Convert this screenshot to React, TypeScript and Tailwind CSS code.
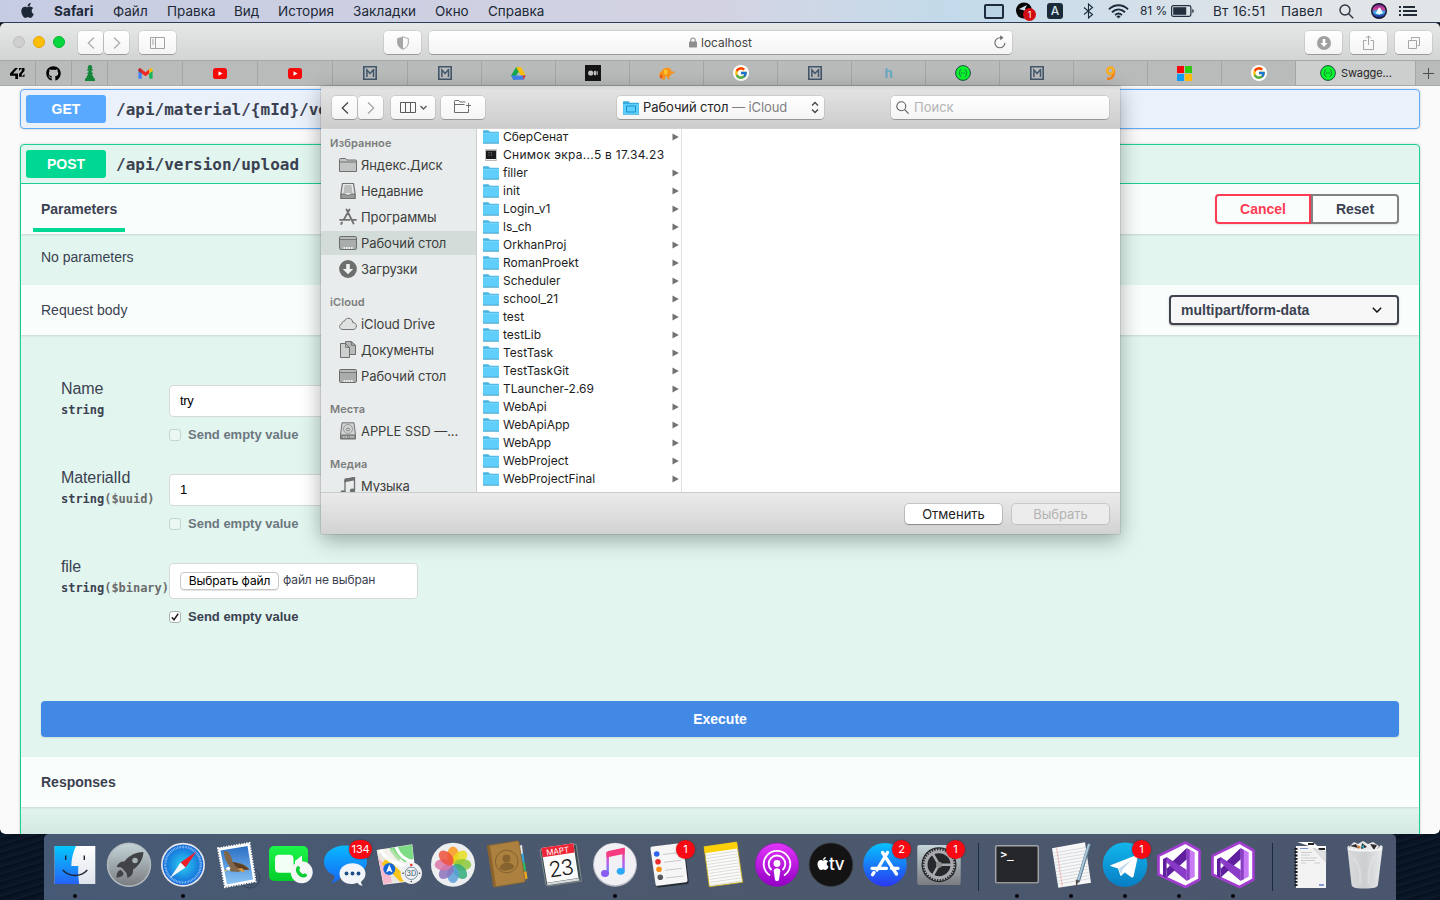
import type { ReactNode } from "react";
import { FaApple, FaGithub } from "react-icons/fa";
import { FcGoogle } from "react-icons/fc";

/* ---------- menu bar ---------- */

const MENUS: [string, string][] = [
  ["Файл", "w-[54px] tracking-[0.05px]"],
  ["Правка", "w-[67px]"],
  ["Вид", "w-[44px]"],
  ["История", "w-[75px] tracking-[0.05px]"],
  ["Закладки", "w-[82px] tracking-[0.1px]"],
  ["Окно", "w-[53px]"],
  ["Справка", "w-[60px]"],
];

function MenuBar() {
  return (
    <div className="flex h-[22px] shrink-0 items-center bg-linear-to-r from-[#c6cce2] via-[#d3d3e2] to-[#e3e4e8] text-[13.5px] leading-[22px] whitespace-nowrap text-[#1c2836]">
      <div className="flex h-full w-full items-center bg-linear-to-r from-transparent from-50% via-[#c2daea] via-66% to-[#e2e5e8] to-90%">
        <FaApple className="ml-[19px] h-[17px] w-[17px] -translate-y-px" />
        <span className="ml-[18px] w-[59px] font-bold tracking-[0.1px]">Safari</span>
        {MENUS.map(([name, cls]) => (
          <span key={name} className={cls}>{name}</span>
        ))}
        <div className="ml-auto flex h-full items-center pr-[23px]">
          <div className="h-[15px] w-[20px] rounded-[2px] border-2 border-[#1c2b3d] bg-[#b9d3e2]" />
          <svg className="ml-[12px] h-[20px] w-[21px]" viewBox="0 0 21 20">
            <circle cx="8" cy="9.500" r="8" fill="#050505" />
            <path d="M3 8l8-4-2 4 1 2z" fill="#cfe0ec" />
            <circle cx="13.500" cy="13.500" r="6.500" fill="#d20a12" />
            <text x="13.500" y="16.800" textAnchor="middle" fontFamily="Inter, sans-serif" fontSize="9" fill="#fff">1</text>
          </svg>
          <div className="ml-[10px] flex h-[16px] w-[16px] items-center justify-center rounded-[3px] bg-[#1b2a39] text-[12px] font-medium text-[#d6e6f0]">A</div>
          <svg className="ml-[20px] h-[16px] w-[11px]" viewBox="0 0 11 16" fill="none" stroke="#1c2b3a" strokeWidth="1.100">
            <path d="M1 4.500l8.500 7L5.500 15V1l4 3.500L1 11.500" />
          </svg>
          <svg className="ml-[14px] h-[15px] w-[21px]" viewBox="0 0 21 15" fill="none" stroke="#1c2b3a" strokeWidth="1.900">
            <path d="M1 5.200C6.500-.1 14.500-.1 20 5.200M4 8.200c4-3.700 9-3.700 13 0M7 11.100c2.200-1.900 4.800-1.900 7 0" />
            <path d="M8.300 12.200L10.500 14.600l2.200-2.400c-1.300-1-3.100-1-4.400 0z" fill="#1c2b3a" stroke="none" />
          </svg>
          <span className="ml-[11px] w-[31px] text-[12px] tracking-[-0.1px]">81 %</span>
          <svg className="h-[12px] w-[24px]" viewBox="0 0 24 12">
            <rect x=".6" y=".6" width="19.300" height="10.800" rx="1.800" fill="none" stroke="#222f3d" strokeWidth="1.200" />
            <rect x="2.200" y="2.200" width="13" height="7.600" fill="#222f3d" />
            <path d="M21.300 3.800c2 .8 2 3.600 0 4.400z" fill="#222f3d" />
          </svg>
          <span className="ml-[18px] w-[68px] tracking-[0.25px]">Вт 16:51</span>
          <span className="w-[58px] tracking-[0.15px]">Павел</span>
          <svg className="h-[15px] w-[15px]" viewBox="0 0 15 15" fill="none" stroke="#2b3440" strokeWidth="1.400">
            <circle cx="6" cy="6" r="5" />
            <path d="M9.700 9.700l4.500 4.500" />
          </svg>
          <svg className="ml-[17px] h-[16px] w-[16px]" viewBox="0 0 16 16">
            <defs>
              <linearGradient id="siri" x1="0" y1="0" x2="0" y2="1">
                <stop offset="0" stopColor="#7a2a8a" />
                <stop offset=".35" stopColor="#d0409c" />
                <stop offset=".6" stopColor="#3f7ee0" />
                <stop offset="1" stopColor="#1a2a80" />
              </linearGradient>
            </defs>
            <circle cx="8" cy="8" r="8" fill="#14132c" />
            <circle cx="8" cy="8" r="6.600" fill="url(#siri)" />
            <path d="M1.800 9c2-1 3.500-2.500 6.200-2.500S12.500 8 14.500 9c-2 .2-3 3-6.500 3S4.500 9.500 1.800 9z" fill="#35c8f0" opacity=".75" />
            <path d="M4 11c2-1.200 3-6.500 4.500-6.500S10.500 9 12.500 10.500c-2-.3-3 .5-4 1-1.200-.8-2.500-.8-4.500-.5z" fill="#fff" opacity=".92" />
          </svg>
          <svg className="ml-[12px] h-[12px] w-[18px]" viewBox="0 0 18 12" fill="#222b35">
            <path d="M0 1h2v2H0zM0 5h2v2H0zM0 9h2v2H0zM4 1h12v2H4zM4 5h14v2H4zM4 9h14v2H4z" />
          </svg>
        </div>
      </div>
    </div>
  );
}

/* ---------- browser chrome ---------- */

function ToolButton({ className, children }: { className: string; children?: ReactNode }) {
  return (
    <div className={`flex h-[23px] items-center justify-center rounded-[4px] bg-linear-to-b from-white to-[#f4f4f4] shadow-[0_0_0_0.5px_rgba(0,0,0,0.16),0_1px_0.5px_rgba(0,0,0,0.22)] ${className}`}>
      {children}
    </div>
  );
}

function BrowserToolbar() {
  return (
    <div className="flex h-[37px] shrink-0 items-start bg-linear-to-b from-[#e5e8e7] to-[#d3d5d4] pt-[8px]">
      <div className="mt-[5px] ml-[13px] flex gap-[8px]">
        <div className="h-[12px] w-[12px] rounded-full border border-[#bdbdbd] bg-[#d0cfd0]" />
        <div className="h-[12px] w-[12px] rounded-full border border-[#e2a300] bg-[#ffbf06]" />
        <div className="h-[12px] w-[12px] rounded-full border border-[#00b52d] bg-[#06d73f]" />
      </div>
      <ToolButton className="ml-[13px] w-[25px]">
        <svg className="h-[14px] w-[8px]" viewBox="0 0 8 14" fill="none" stroke="#adadad" strokeWidth="1.300"><path d="M7 1.500L1.300 7 7 12.500" /></svg>
      </ToolButton>
      <ToolButton className="ml-px w-[25px]">
        <svg className="h-[14px] w-[8px]" viewBox="0 0 8 14" fill="none" stroke="#adadad" strokeWidth="1.300"><path d="M1 1.500L6.700 7 1 12.500" /></svg>
      </ToolButton>
      <ToolButton className="ml-[10px] w-[37px]">
        <svg className="h-[12px] w-[15px]" viewBox="0 0 15 12" fill="none" stroke="#a3a3a3" strokeWidth="1">
          <path d="M.5.500h14v11H.5zM5.500.500v11M2 3h2M2 5h2M2 7h2" />
        </svg>
      </ToolButton>
      <ToolButton className="ml-[208px] w-[37px]">
        <svg className="h-[14px] w-[12px]" viewBox="0 0 12 14">
          <path d="M6 .7C4.500 1.700 2.500 2.200.7 2.400V7c0 3 2.300 5 5.300 6.300C9 12 11.300 10 11.300 7V2.400C9.500 2.200 7.500 1.700 6 .7z" fill="none" stroke="#a5a5a5" />
          <path d="M6 .7C4.500 1.700 2.500 2.200.7 2.400V7c0 3 2.300 5 5.300 6.300z" fill="#a5a5a5" />
        </svg>
      </ToolButton>
      <ToolButton className="relative ml-[8px] w-[583px]">
        <svg className="mr-[4px] h-[11px] w-[8px]" viewBox="0 0 8 11">
          <path d="M1.800 5V3.200a2.200 2.200 0 014.400 0V5" fill="none" stroke="#8f8f8f" strokeWidth="1.100" />
          <rect y="4.500" width="8" height="6" rx=".8" fill="#8f8f8f" />
        </svg>
        <span className="text-[12px] leading-[22px] tracking-[-0.05px] text-[#454545]">localhost</span>
        <svg className="absolute top-[4px] right-[6px] h-[14px] w-[12px]" viewBox="0 0 12 14" fill="none" stroke="#6b6b6b" strokeWidth="1.100">
          <path d="M10.900 6.200M10.900 7.800A5 5 0 116 2.800h1.500" />
          <path d="M6.200.3l3.300 2.500-3.300 2.500z" fill="#6b6b6b" stroke="none" />
        </svg>
      </ToolButton>
      <div className="mr-[8px] ml-auto flex gap-[8px]">
        <ToolButton className="w-[37px]">
          <svg className="h-[14px] w-[14px]" viewBox="0 0 14 14"><circle cx="7" cy="7" r="7" fill="#a0a0a0" /><path d="M5.700 3h2.600v4h2.300L7 11 3.400 7h2.300z" fill="#fff" /></svg>
        </ToolButton>
        <ToolButton className="w-[37px]">
          <svg className="h-[15px] w-[11px]" viewBox="0 0 11 15" fill="none" stroke="#a6a6a6"><path d="M3.500 5.500h-3v9h10v-9h-3M5.500 10V1M3 3.300L5.500.8 8 3.300" /></svg>
        </ToolButton>
        <ToolButton className="w-[37px]">
          <svg className="h-[12px] w-[12px]" viewBox="0 0 12 12" fill="none" stroke="#a6a6a6"><path d="M.5 3.500h8v8h-8zM3.500 2.500v-2h8v8h-2" /></svg>
        </ToolButton>
      </div>
    </div>
  );
}

const YouTube = () => (
  <svg className="h-[11px] w-[14px]" viewBox="0 0 14 11"><rect width="14" height="11" rx="2.800" fill="#f50a0a" /><path d="M5.500 3.200v4.600l4-2.300z" fill="#fff" /></svg>
);
const MLogo = () => (
  <svg className="h-[14px] w-[14px]" viewBox="0 0 14 14" fill="none" stroke="#42566c">
    <path d="M.8.800h12.400v12.400H.8z" strokeWidth="1.600" />
    <path d="M3.900 11V4L7 7.500 10.500 3.800M10.500 3V11" strokeWidth="1.500" />
  </svg>
);
const Google = () => (
  <div className="flex h-[16px] w-[16px] items-center justify-center rounded-full bg-white"><FcGoogle className="h-[14px] w-[14px]" /></div>
);
const Swagger = () => (
  <svg className="h-[16px] w-[16px]" viewBox="0 0 16 16">
    <circle cx="8" cy="8" r="7.400" fill="#0cf52f" stroke="#17423c" strokeWidth=".9" />
    <path d="M6.300 4.500c-2 0-.8 2.500-2.300 3.500 1.500 1 .3 3.500 2.300 3.500M9.700 4.500c2 0 .8 2.500 2.300 3.500-1.500 1-.3 3.500-2.300 3.500" fill="none" stroke="#17423c" strokeWidth=".8" opacity=".8" />
    <path d="M6 8h4" stroke="#17423c" strokeDasharray="1 .6" strokeWidth=".9" opacity=".8" />
  </svg>
);
const Gmail = () => (
  <svg className="h-[11px] w-[15px]" viewBox="0 0 15 11">
    <path d="M.4 2.500v7.700c0 .4.300.6.600.6h2.800V5z" fill="#4285f4" />
    <path d="M14.600 2.500v7.700c0 .4-.3.600-.6.600h-2.800V5z" fill="#18b55b" />
    <path d="M3.800 1.300l3.700 2.900 3.700-2.900v4.100L7.500 8.300 3.800 5.400z" fill="#f02a22" />
    <path d="M.4 2.900V1.700C.4.400 1.700-.1 2.700.5l1.100.8v4.100z" fill="#c5221f" />
    <path d="M14.600 2.900V1.700c0-1.300-1.300-1.800-2.300-1.200l-1.100.8v4.100z" fill="#fbbc04" />
  </svg>
);
const Drive = () => (
  <svg className="h-[13px] w-[15px]" viewBox="0 0 15 13">
    <path d="M5 .3h2.500l2.300 4-5.200 8.400H2.400L.2 8.600z" fill="#12a94f" />
    <path d="M5 .3h5l4.800 8.300H9.900z" fill="#ffc107" />
    <path d="M.2 8.600h14.600l-2.200 4.100H2.400z" fill="#4280f3" />
    <path d="M11.500 8.600h3.300l-2.200 4.100z" fill="#ea4335" />
    <path d="M7.500 4.800L9.700 8.600H5.200z" fill="#bbbdbc" />
  </svg>
);

const TABS: [string, ReactNode][] = [
  ["w-[36px]", <svg key="a" className="h-[11px] w-[15px]" viewBox="0 0 15 11"><path d="M5 0H8L3 5.500H8V11H5.300V7.700H0V5.500zM9 0h2.700L9 3zM14.500 0v3l-2.700 3v2.700H9V6l2.700-3V0zM14.500 6v2.700h-2.700z" /></svg>],
  ["w-[36px]", <FaGithub key="b" className="h-[15px] w-[15px] text-black" />],
  ["w-[36px]", <svg key="c" className="h-[16px] w-[10px]" viewBox="0 0 10 16" fill="#14863a"><circle cx="5" cy="2.200" r="2.200" /><path d="M2.200 4h5.600v1.400H6.500l.4 2.300h1v1.200H6.800L9 13l1 1v2H0v-2l1-1 2.200-4.100h-1V7.700h1l.3-2.300H2.200z" /></svg>],
  ["w-[75px]", <Gmail key="d" />],
  ["w-[75px]", <YouTube key="e" />],
  ["w-[75px]", <YouTube key="f" />],
  ["w-[75px]", <MLogo key="g" />],
  ["w-[74px]", <MLogo key="h" />],
  ["w-[74px]", <Drive key="i" />],
  ["w-[74px]", <svg key="j" className="h-[16px] w-[16px]" viewBox="0 0 16 16"><path fill="#151515" d="M0 0h16v16H0z" /><circle cx="5.700" cy="8" r="2.600" fill="#c3c3c3" /><ellipse cx="10" cy="8" rx="1.300" ry="2.500" fill="#c3c3c3" /><ellipse cx="12.200" cy="8" rx=".6" ry="2.200" fill="#c3c3c3" /></svg>],
  ["w-[74px]", <svg key="k" className="h-[13px] w-[16px]" viewBox="0 0 16 13"><path d="M.5 10C-.3 6.500 1 4.500 3 4c1-2.500 3-3.500 5-3.200C10.500.3 12.500 2 12.500 4.500c1 .7 2-.7 3.200-.3.200 1.500-1.500 2.600-3.200 2.600-.3 1.700-1 2.200-2 2.500V12H8.300V9.500H6V12.500H2.500V10z" fill="#f9941a" /><path d="M5 3c2.500-1.200 4 .5 3.500 3S5.500 8.500 5 6z" fill="#fdc52a" /><path d="M1.500 7.500L1 11l1.500.5 1-3z" fill="#f04b1e" /></svg>],
  ["w-[74px]", <Google key="l" />],
  ["w-[74px]", <MLogo key="m" />],
  ["w-[74px]", <span key="n" className="text-[13px] leading-none font-bold text-[#64a9c2]">h</span>],
  ["w-[74px]", <Swagger key="o" />],
  ["w-[74px]", <MLogo key="p" />],
  ["w-[74px]", <svg key="q" className="h-[15px] w-[11px]" viewBox="0 0 11 15" fill="none"><circle cx="5.500" cy="4.700" r="3.200" stroke="#f59b14" strokeWidth="2.600" /><path d="M8.800 4.500C9.500 9.500 7.500 12.700 2 13" stroke="#f7861a" strokeWidth="2.600" /><circle cx="5.500" cy="4.700" r="3.200" stroke="#ffcb2e" strokeWidth="1" /></svg>],
  ["w-[74px]", <svg key="r" className="h-[15px] w-[15px]" viewBox="0 0 15 15"><path fill="#f8080c" d="M0 0h7v7H0z" /><path fill="#30cb10" d="M8 0h7v7H8z" /><path fill="#0d9cf7" d="M0 8h7v7H0z" /><path fill="#ffb90a" d="M8 8h7v7H8z" /></svg>],
  ["w-[74px]", <Google key="s" />],
];

function TabBar() {
  return (
    <div className="flex h-[26px] shrink-0 border-t border-b border-[#a7a9a8] bg-[#b9bbba]">
      {TABS.map(([width, icon], i) => (
        <div key={i} className={`flex h-full shrink-0 items-center justify-center border-r border-[#a4a6a5] ${width}`}>{icon}</div>
      ))}
      <div className="flex h-full w-[120px] shrink-0 items-center border-r border-[#a4a6a5] bg-[#cdcfce] pl-[24px]">
        <Swagger />
        <span className="ml-[5px] text-[11px] tracking-[-0.1px] text-[#262626]">Swagge...</span>
      </div>
      <div className="flex flex-1 items-center justify-center">
        <svg className="h-[11px] w-[11px]" viewBox="0 0 11 11" stroke="#4d4d4d"><path d="M5.500 0v11M0 5.500h11" /></svg>
      </div>
    </div>
  );
}

/* ---------- API documentation page ---------- */

function SendEmpty({ checked = false }: { checked?: boolean }) {
  return (
    <div className={`flex h-[14px] items-center ${checked ? "" : "opacity-70"}`}>
      <div className={`flex h-[12px] w-[12px] items-center justify-center rounded-[3px] border ${checked ? "border-[#a9b3af] bg-white" : "border-[#b5c8c1] bg-[#eef8f5]"}`}>
        {checked && (
          <svg className="h-[8px] w-[8px]" viewBox="0 0 8 8" fill="none" stroke="#222" strokeWidth="1.500"><path d="M.8 4.300L3 6.800 7.200.8" /></svg>
        )}
      </div>
      <span className="ml-[7px] font-['Liberation_Sans',Arial,sans-serif] text-[13px] leading-[14px] font-bold text-[#3b4151]">Send empty value</span>
    </div>
  );
}

function Field({ name, format, children }: { name: string; format?: string; children: ReactNode }) {
  return (
    <div className="flex h-[89px]">
      <div className="w-[108px] shrink-0 pt-[4px] whitespace-nowrap">
        <div className="text-[16px] leading-[20px] tracking-[-0.1px]">{name}</div>
        <div className="mt-[4px] font-['DejaVu_Sans_Mono',monospace] text-[12px] leading-[15px] font-bold tracking-[-0.03px]">
          string{format && <span className="text-[#6b6b6b]">({format})</span>}
        </div>
      </div>
      <div className="pt-[10px]">{children}</div>
    </div>
  );
}

function TextInput({ value }: { value: string }) {
  return (
    <>
      <div className="flex h-[32px] w-[340px] items-center rounded-[4px] border border-[#d5dad8] bg-white pl-[10px] font-['Liberation_Sans',Arial,sans-serif] text-[13px] tracking-[-0.3px] text-black">{value}</div>
      <div className="mt-[11px]"><SendEmpty /></div>
    </>
  );
}

function ApiPage() {
  return (
    <div className="h-[748px] shrink-0 overflow-hidden rounded-b-[5px] bg-[#fafafa] px-[20px] pt-[3px] font-['Liberation_Sans',Arial,sans-serif] text-[14px] text-[#3b4151]">
      <div className="flex h-[40px] items-center rounded-[4px] border border-[#5fabfb] bg-[#eaf1fb] pl-[5px] shadow-[0_0_3px_rgba(0,0,0,0.19)]">
        <div className="h-[28px] w-[80px] rounded-[3px] bg-[#58a9ff] text-center leading-[28px] font-bold text-white">GET</div>
        <div className="ml-[10px] pt-px font-['DejaVu_Sans_Mono',monospace] text-[16px] font-bold">/api/material/{"{mId}"}/version</div>
      </div>
      <div className="mt-[15px] h-[720px] rounded-[4px] border border-[#1bd096] bg-[#e2f6ef] shadow-[0_0_3px_rgba(0,0,0,0.19)]">
        <div className="flex h-[39px] items-center border-b border-[#1bd096] pl-[5px]">
          <div className="h-[28px] w-[80px] rounded-[3px] bg-[#00d793] text-center leading-[28px] font-bold text-white">POST</div>
          <div className="ml-[10px] pt-px font-['DejaVu_Sans_Mono',monospace] text-[16px] font-bold">/api/version/upload</div>
        </div>
        <div className="flex h-[50px] items-center justify-between bg-[#f9fdfc] pr-[20px] pl-[12px] shadow-[0_1px_2px_rgba(0,0,0,0.12)]">
          <div className="mt-[2px] h-[48px] w-[92px] px-[8px] pt-[15px] leading-[16px] font-bold">
            Parameters
            <div className="-mx-[8px] mt-[11px] h-[4px] bg-[#00d793]" />
          </div>
          <div className="flex h-[30px] text-center leading-[26px] font-bold">
            <div className="w-[96px] rounded-l-[4px] border-2 border-[#fb3c54] text-[#fb3c54] shadow-[0_1px_2px_rgba(0,0,0,0.1)]">Cancel</div>
            <div className="w-[88px] rounded-r-[4px] border-2 border-[#828282] shadow-[0_1px_2px_rgba(0,0,0,0.1)]">Reset</div>
          </div>
        </div>
        <div className="h-[51px] pt-[15px] pl-[20px] leading-[16px]">No parameters</div>
        <div className="flex h-[50px] items-center justify-between bg-[#f9fdfc] pr-[20px] pl-[20px] shadow-[0_1px_2px_rgba(0,0,0,0.12)]">
          <span>Request body</span>
          <div className="flex h-[30px] w-[230px] items-center justify-between rounded-[4px] border-2 border-[#41444e] bg-[#f7f7f7] pr-[15px] pl-[10px] font-bold shadow-[0_1px_2px_rgba(0,0,0,0.25)]">
            multipart/form-data
            <svg className="h-[6px] w-[10px]" viewBox="0 0 10 6" fill="none" stroke="#111" strokeWidth="1.500"><path d="M.8.800L5 5 9.200.800" /></svg>
          </div>
        </div>
        <div className="h-[326px] pt-[40px] pl-[40px]">
          <Field name="Name"><TextInput value="try" /></Field>
          <Field name="MaterialId" format="$uuid"><TextInput value="1" /></Field>
          <Field name="file" format="$binary">
            <div className="flex h-[36px] w-[249px] items-center rounded-[4px] border border-[#d5dad8] bg-white pl-[10px] font-['Inter',sans-serif] text-[12px] tracking-[-0.12px] whitespace-nowrap">
              <div className="h-[18px] w-[99px] rounded-[4px] border border-[#c6c6c6] text-center leading-[15px] text-black shadow-[0_1px_0_rgba(0,0,0,0.1)]">Выбрать файл</div>
              <span className="ml-[4px] -translate-y-px">файл не выбран</span>
            </div>
            <div className="mt-[11px]"><SendEmpty checked /></div>
          </Field>
        </div>
        <div className="mx-[20px] mt-[40px] h-[36px] rounded-[4px] bg-[#4189e5] text-center leading-[36px] font-bold text-white shadow-[0_1px_2px_rgba(0,0,0,0.1)]">Execute</div>
        <div className="mt-[20px] flex h-[50px] items-center bg-[#f9fdfc] pl-[20px] font-bold shadow-[0_1px_2px_rgba(0,0,0,0.12)]">Responses</div>
        <div className="h-[27px] bg-linear-to-b from-transparent to-[#d3e8e0]" />
      </div>
    </div>
  );
}

/* ---------- file dialog ---------- */

const FolderIcon = () => (
  <svg className="h-[14px] w-[16px]" viewBox="0 0 16 14">
    <path d="M0 1.200C0 .5.400.2 1 .2h4.500L6.800 1.700H15.200c.5 0 .8.300.8.800V13H0z" fill="#48b4e2" />
    <path d="M0 3.200h16v9.600H0z" fill="#5fcefa" />
    <path d="M0 2.800h16v.8H0z" fill="#86dcfd" />
    <path d="M0 12.700h16v1H0z" fill="#4aa5cc" />
  </svg>
);

const FILES: { name: string; file?: boolean }[] = [
  { name: "СберСенат" },
  { name: "Снимок экра...5 в 17.34.23", file: true },
  { name: "filler" },
  { name: "init" },
  { name: "Login_v1" },
  { name: "ls_ch" },
  { name: "OrkhanProj" },
  { name: "RomanProekt" },
  { name: "Scheduler" },
  { name: "school_21" },
  { name: "test" },
  { name: "testLib" },
  { name: "TestTask" },
  { name: "TestTaskGit" },
  { name: "TLauncher-2.69" },
  { name: "WebApi" },
  { name: "WebApiApp" },
  { name: "WebApp" },
  { name: "WebProject" },
  { name: "WebProjectFinal" },
];

const sideSvg = "h-[18px] w-[18px] shrink-0";
const SideFolder = () => (
  <svg className={sideSvg} viewBox="0 0 18 18" stroke="#6f7070" fill="#c3c5c5"><path d="M.5 3.500c0-.8.300-1 1-1h5l1.500 1.500h8.500c.7 0 1 .3 1 1v10.500H.5z" /><path d="M.5 6h17" /></svg>
);
const SideDesktop = () => (
  <svg className={sideSvg} viewBox="0 0 18 18" stroke="#6b6c6c"><rect x=".5" y="2.500" width="17" height="13" rx="1.200" fill="#a9adac" /><path d="M1.500 4h15" stroke="#c4c7c6" /><path d="M1 5.500h16" strokeWidth=".8" /><path d="M4.500 14h9.300" stroke="#eceeee" strokeWidth="1.800" strokeDasharray="1.700 .8" /></svg>
);
const SideRecent = () => (
  <svg className={sideSvg} viewBox="0 0 18 18" stroke="#6f7070" fill="none"><path d="M3.500 1.500h11l1.500 9.500v5.500H2V11z" fill="#e6e8e8" strokeWidth="1.200" /><path d="M5.500 4h7M5 6h8M5 8h8M4.500 10h9" strokeWidth=".7" /><path d="M2 12h4.500c.3 2 4.700 2 5 0H16v4.500H2z" fill="#9a9b9b" /></svg>
);
const SideApps = () => (
  <svg className={sideSvg} viewBox="0 0 18 18" stroke="#6f7070" fill="none" strokeWidth="1.800" strokeLinecap="round"><path d="M7.500 1.500l7 14M10.500 1.500L5 11.300M3 14.500l-.8 1.500M1 11.800h9.500M13.500 11.800H17" /></svg>
);
const SideDownload = () => (
  <svg className={sideSvg} viewBox="0 0 18 18"><circle cx="9" cy="9" r="8.900" fill="#6d6e6e" /><path d="M7.200 4h3.600v5h3.400L9 14.200 3.800 9h3.400z" fill="#f0f2f2" /></svg>
);
const SideCloud = () => (
  <svg className={sideSvg} viewBox="0 0 18 18" fill="#dfe1e1" stroke="#757676"><path d="M4 14.500C2 14.500.6 13.300.6 11.600c0-1.500 1-2.500 2.300-2.700C2.700 7 4 6 5.300 6.300 6.200 4 8 3 10 3.300c2.200.3 3.700 2 3.700 4.200 2.200 0 3.700 1.500 3.700 3.500s-1.400 3.500-3.400 3.500z" /></svg>
);
const SideDocs = () => (
  <svg className={sideSvg} viewBox="0 0 18 18" stroke="#6b6c6c"><path d="M6.500.600h6l4 3.700v9.200h-10z" fill="#b9bbbb" /><path d="M12.300.600v3.700h4.200" fill="none" /><path d="M1.500 2.500h5.200l3.800 3.800v10.200h-9z" fill="#cdcfcf" /><path d="M6.700 2.500v3.800h3.800" fill="none" /></svg>
);
const SideDisk = () => (
  <svg className={sideSvg} viewBox="0 0 18 18" stroke="#6f7070" fill="none"><path d="M3 .8h12l1.500 12v4h-15v-4z" fill="#d2d4d4" /><path d="M1.500 13h15v3.800h-15z" fill="#8d8f8f" /><circle cx="9" cy="7" r="4.500" strokeWidth=".6" /><ellipse cx="9" cy="7.500" rx="1.800" ry="1.400" strokeWidth=".8" /><path d="M4 15h5.500M12 14v2M14 14v2" stroke="#e8e8e8" strokeDasharray="1.500 1" /></svg>
);
const SideMusic = () => (
  <svg className={sideSvg} viewBox="0 0 18 18"><path d="M6 2.500L15.500.600v13" fill="none" stroke="#6d6e6e" strokeWidth="1.300" /><path d="M5.400 1.800L16 0v3.300L5.400 5.200z" fill="#6d6e6e" /><path d="M6 3v12" stroke="#6d6e6e" strokeWidth="1.300" /><ellipse cx="4" cy="15.500" rx="2.800" ry="2.200" fill="#6d6e6e" /><ellipse cx="13.500" cy="13.500" rx="2.700" ry="2.100" fill="#6d6e6e" /></svg>
);

function SideHeader({ children, first = false }: { children: ReactNode; first?: boolean }) {
  return (
    <div className={`shrink-0 pl-[9px] text-[11px] leading-[18px] font-semibold tracking-[0.1px] text-[#7b7d7c] ${first ? "h-[23px] pt-[5px]" : "h-[29px] pt-[11px]"}`}>{children}</div>
  );
}

function SideItem({ icon, children, active = false }: { icon: ReactNode; children: ReactNode; active?: boolean }) {
  return (
    <div className="h-[26px] shrink-0 py-px">
      <div className={`flex h-[24px] items-center gap-[4px] pl-[18px] text-[13px] tracking-[-0.09px] whitespace-nowrap text-[#3c3e3d] ${active ? "bg-[#d3dcd9]" : ""}`}>
        {icon}
        <span className="pt-[2px]">{children}</span>
      </div>
    </div>
  );
}

function FileDialog() {
  return (
    <div className="absolute top-[86px] left-[321px] flex h-[448px] w-[799px] flex-col bg-white shadow-[0_0_1px_rgba(0,0,0,0.5),0_6px_20px_rgba(0,0,0,0.33)]">
      <div className="relative flex h-[42px] shrink-0 items-start bg-linear-to-b from-[#e4e4e4] to-[#cdcdcd] pt-[10px] pl-[11px]">
        <div className="absolute inset-x-0 top-0 h-[4px] bg-linear-to-b from-black/6 to-transparent" />
        <ToolButton className="w-[25px]">
          <svg className="h-[14px] w-[8px]" viewBox="0 0 8 14" fill="none" stroke="#454545" strokeWidth="1.300"><path d="M7 1.500L1.300 7 7 12.500" /></svg>
        </ToolButton>
        <ToolButton className="ml-px w-[25px]">
          <svg className="h-[14px] w-[8px]" viewBox="0 0 8 14" fill="none" stroke="#a6a6a6" strokeWidth="1.300"><path d="M1 1.500L6.700 7 1 12.500" /></svg>
        </ToolButton>
        <ToolButton className="ml-[8px] w-[44px]">
          <svg className="h-[11px] w-[27px]" viewBox="0 0 27 11" fill="none" stroke="#5a5a5a"><path d="M.5.500h15v10H.5zM5.500.500v10M10.500.500v10" /><path d="M20.500 4l3 3 3-3" strokeWidth="1.400" /></svg>
        </ToolButton>
        <ToolButton className="ml-[6px] w-[44px]">
          <svg className="h-[13px] w-[18px] -translate-y-px" viewBox="0 0 18 13" fill="none" stroke="#6c6c6c"><path d="M14.500 8.500v4H.5V1.200C.5.700.700.500 1.200.500h3.600L6 2h5.500M.5 4.500h10M12 5.500h5M14.500 3v5" /></svg>
        </ToolButton>
        <ToolButton className="ml-[132px] w-[207px] !justify-start pr-[5px] pl-[6px]">
          <svg className="h-[14px] w-[16px]" viewBox="0 0 16 14"><path d="M0 1.200C0 .5.400.2 1 .2h4.500L6.800 1.700H15.200c.5 0 .8.300.8.800V13.700H0z" fill="#38aade" /><path d="M.3 3h15.400v10H.3z" fill="#5fd0fb" /><path d="M3.500 5h9v6h-9z" fill="#5fd0fb" stroke="#1a8fd0" /></svg>
          <span className="ml-[4px] text-[13px] tracking-[-0.08px] whitespace-nowrap text-[#262626]">Рабочий стол <span className="text-[#808080]">— iCloud</span></span>
          <svg className="ml-auto h-[13px] w-[8px]" viewBox="0 0 8 13" fill="none" stroke="#444" strokeWidth="1.300"><path d="M1 4.500l3-3 3 3M1 8.500l3 3 3-3" /></svg>
        </ToolButton>
        <ToolButton className="ml-[67px] w-[218px] !justify-start pl-[5px]">
          <svg className="h-[13px] w-[13px]" viewBox="0 0 13 13" fill="none" stroke="#5f5f5f" strokeWidth="1.100"><circle cx="5.300" cy="5.300" r="4.500" /><path d="M8.600 8.600l4 4" /></svg>
          <span className="ml-[5px] text-[13px] text-[#b4b4b4]">Поиск</span>
        </ToolButton>
      </div>
      <div className="flex h-[364px] shrink-0 border-t border-[#d2d2d2]">
        <div className="flex w-[156px] shrink-0 flex-col overflow-hidden border-r border-[#cdcfcf] bg-[#e9ecec]">
          <SideHeader first>Избранное</SideHeader>
          <SideItem icon={<SideFolder />}>Яндекс.Диск</SideItem>
          <SideItem icon={<SideRecent />}>Недавние</SideItem>
          <SideItem icon={<SideApps />}>Программы</SideItem>
          <SideItem icon={<SideDesktop />} active>Рабочий стол</SideItem>
          <SideItem icon={<SideDownload />}>Загрузки</SideItem>
          <SideHeader>iCloud</SideHeader>
          <SideItem icon={<SideCloud />}>iCloud Drive</SideItem>
          <SideItem icon={<SideDocs />}>Документы</SideItem>
          <SideItem icon={<SideDesktop />}>Рабочий стол</SideItem>
          <SideHeader>Места</SideHeader>
          <SideItem icon={<SideDisk />}>APPLE SSD —...</SideItem>
          <SideHeader>Медиа</SideHeader>
          <SideItem icon={<SideMusic />}>Музыка</SideItem>
        </div>
        <div className="w-[205px] shrink-0 overflow-hidden border-r border-[#e0e0e0]">
          <div className="-mt-px">
            {FILES.map((f) => (
              <div key={f.name} className="flex h-[18px] items-center pr-[2px] pl-[6px]">
                {f.file ? (
                  <svg className="mr-[2px] ml-[2px] h-[12px] w-[12px]" viewBox="0 0 12 12"><rect width="12" height="12" rx="1" fill="#b9b9b9" /><path d="M.8.800h10.400v10H.8z" fill="#fff" /><path d="M1 1.500h10v8.500H1z" fill="#1b1b1d" /><path d="M3 3.500h2.500M6.500 3v4M3 6h2" stroke="#4c4c50" /></svg>
                ) : (
                  <FolderIcon />
                )}
                <span className={`ml-[4px] text-[12px] leading-[18px] whitespace-nowrap text-[#1d1d1d] ${f.file ? "tracking-[0.28px]" : ""}`}>{f.name}</span>
                {!f.file && <svg className="ml-auto h-[8px] w-[7px]" viewBox="0 0 7 8"><path d="M.5.500L6.800 4 .5 7.500z" fill="#737373" /></svg>}
              </div>
            ))}
          </div>
        </div>
      </div>
      <div className="flex h-[42px] shrink-0 justify-end gap-[10px] border-t border-[#cbcbcb] bg-linear-to-b from-[#ebebeb] to-[#d2d2d2] pt-[11px] pr-[11px] text-center text-[13px] leading-[20px]">
        <div className="h-[20px] w-[97px] rounded-[4px] bg-white text-[#222] shadow-[0_0_0_1px_rgba(0,0,0,0.14),0_1px_1px_rgba(0,0,0,0.25)]">Отменить</div>
        <div className="h-[20px] w-[97px] rounded-[4px] bg-[#ececec] text-[#b3b3b3] shadow-[0_0_0_1px_rgba(0,0,0,0.11)]">Выбрать</div>
      </div>
    </div>
  );
}

/* ---------- dock ---------- */

function DockItem({ children, badge, running = false }: { children: ReactNode; badge?: string; running?: boolean }) {
  return (
    <div className="relative h-[66px] w-[54px] shrink-0">
      <svg className="h-[66px] w-[54px]" viewBox="0 0 54 66">
        {children}
        {running && <circle cx="27" cy="62" r="2" fill="#05070b" />}
      </svg>
      {badge && (
        <div className={`absolute top-[6px] flex h-[19px] items-center justify-center rounded-full bg-[#f80a14] text-[11px] tracking-[-0.2px] text-white shadow-[0_0_2px_rgba(0,0,0,0.4)] ${badge.length > 1 ? "left-[31px] w-[23px]" : "left-[34px] w-[19px]"}`}>
          {badge}
        </div>
      )}
    </div>
  );
}

const LINES = [0, 1, 2, 3, 4, 5, 6, 7, 8, 9, 10];
const PETALS: [number, string][] = [
  [0, "#fb9a1c"], [45, "#e8dd1e"], [90, "#8cc83c"], [135, "#35ab7d"],
  [180, "#5b9fd8"], [225, "#8d72bd"], [270, "#dd76a8"], [315, "#f0513c"],
];
const TEETH = Array.from({ length: 36 }, (_, i) => i * 10);

const VisualStudio = () => (
  <>
    <path d="M6.500 21.800L33.500 8.500 47.500 16.500V45.500L33.500 53 6.500 40.500z" fill="#fff" stroke="#a13ed0" strokeWidth="2.600" strokeLinejoin="round" />
    <path d="M11 25.300L14.800 23.300 34.700 36V46.700L11 27.500z" fill="#9140cf" />
    <path d="M11 25.300L14.800 23.300V38.500L34.700 25.300V14.300L14.800 33 14.500 37.500 14.800 44.300 11 42z" fill="#5f1f9f" />
    <path d="M14.800 38.500V43.500L34.700 25.300V14.300L22 26.300z" fill="#5f1f9f" />
    <path d="M14.800 26.500l4.200 4-4.200 4.200z" fill="#fff" />
    <path d="M18 25.500L34.700 36V46.700L14.800 29l0-5.700z" fill="#8a3cc8" opacity=".92" />
    <path d="M14.800 29l2.600 2.200-2.600 2.600z" fill="#fff" />
    <path d="M34.700 14.300l8 4v24.400l-8 4z" fill="#c77af3" />
    <path d="M34.700 14.300l3 1.500v29.400l-3 1.500z" fill="#8a40c4" />
  </>
);

function Dock() {
  return (
    <div className="absolute top-[834px] left-[44px] flex h-[66px] w-[1352px] rounded-t-[5px] bg-linear-to-r from-[#475a75] via-[#4c586c] to-[#4a566d] pl-[4px]">
      <DockItem running>
        <defs>
          <linearGradient id="finderL" x2="0" y2="1"><stop stopColor="#05c7fd" /><stop offset="1" stopColor="#2563f5" /></linearGradient>
          <linearGradient id="silver" x2="0" y2="1"><stop stopColor="#c4d5d9" /><stop offset="1" stopColor="#7a7c80" /></linearGradient>
          <linearGradient id="white" x2="0" y2="1"><stop stopColor="#fff" /><stop offset="1" stopColor="#dfe3ec" /></linearGradient>
          <radialGradient id="compass"><stop stopColor="#28d2f2" /><stop offset="1" stopColor="#1565d8" /></radialGradient>
          <linearGradient id="green" x2="0" y2="1"><stop stopColor="#1cf54a" /><stop offset="1" stopColor="#04cd2a" /></linearGradient>
          <linearGradient id="blue" x2="0" y2="1"><stop stopColor="#08b9ff" /><stop offset="1" stopColor="#1767f5" /></linearGradient>
          <linearGradient id="sky" x2="0" y2="1"><stop stopColor="#2a6fc4" /><stop offset="1" stopColor="#8cc5f5" /></linearGradient>
          <linearGradient id="note" gradientUnits="userSpaceOnUse" x1="27" y1="15" x2="27" y2="41"><stop stopColor="#fb3a72" /><stop offset=".55" stopColor="#b65cf0" /><stop offset="1" stopColor="#3f9bf5" /></linearGradient>
          <linearGradient id="pod" x2="0" y2="1"><stop stopColor="#e236fa" /><stop offset="1" stopColor="#9300c4" /></linearGradient>
          <linearGradient id="store" x2="0" y2="1"><stop stopColor="#06c3ff" /><stop offset="1" stopColor="#2a36f0" /></linearGradient>
          <linearGradient id="tele" x2="0" y2="1"><stop stopColor="#12b7ec" /><stop offset="1" stopColor="#087dc4" /></linearGradient>
          <linearGradient id="bin" x2="1" y2="0"><stop stopColor="#d9dbdc" /><stop offset=".5" stopColor="#cccecf" /><stop offset="1" stopColor="#e8eaeb" /></linearGradient>
        </defs>
        <path d="M6.700 12h40.600v38H6.700z" fill="url(#white)" />
        <path d="M6.700 12H28c-3 6-4.500 13-4.700 20h7c-.3 6 0 12 .9 18H6.700z" fill="url(#finderL)" />
        <path d="M17.700 21.500v4.500M36.300 21.500v4.500" stroke="#1c2430" strokeWidth="1.400" />
        <path d="M14.700 36c7 7.300 18 7.300 24.600 0" fill="none" stroke="#1c2430" strokeWidth="1.400" />
      </DockItem>
      <DockItem>
        <circle cx="27" cy="30.700" r="21.500" fill="url(#silver)" stroke="#b5bcc1" strokeWidth="1.400" />
        <path d="M41.500 18C35 18 27 21 22.500 27.500c-3.500-.5-6.500 1.500-8 5.500l5 .5 5 5.500 1 5c4-1.500 6-4.500 5.500-8.500C37.500 31.500 41 25 41.500 18z" fill="#414347" />
        <circle cx="33" cy="26.500" r="2.800" fill="#a7b2b7" />
        <path d="M19 36c-3 0-4.500 3.500-4.500 7.500 4 0 7-1.500 7-4.500z" fill="#414347" />
      </DockItem>
      <DockItem running>
        <circle cx="27" cy="30.700" r="22" fill="#e3e6ea" />
        <circle cx="27" cy="30.700" r="20.300" fill="url(#compass)" />
        <circle cx="27" cy="30.700" r="17.800" fill="none" stroke="#b9e2fb" strokeWidth="2.500" strokeDasharray=".7 .85" opacity=".8" />
        <path d="M40.500 17.500L29.500 33.500 24.500 28.500z" fill="#f21d26" />
        <path d="M14 44l10.500-15.500 5 5z" fill="#f2f4f5" />
      </DockItem>
      <DockItem>
        <circle cx="40" cy="44" r="10" fill="none" stroke="#2d3b50" opacity=".7" />
        <circle cx="40" cy="44" r="7" fill="none" stroke="#2d3b50" opacity=".6" />
        <path d="M8 14.300L39.500 9 45.500 47.500 15 53z" fill="#fff" stroke="#fff" strokeWidth="2" strokeDasharray="1.500 1.100" />
        <path d="M10.500 16.500L37.500 12 43 45.500 17 50.500z" fill="url(#sky)" />
        <path d="M14 17.500c1.500-1 3.500-.5 5 1.500 2 2.500 3 5 3.500 8.500 1.500 1 3.500 1.500 5.500 1.500 4.500.2 8.500 2.500 12 7-3 0-5.500-.3-8 0-1.500 1.700-4.500 2.500-8 1.500-2.500.5-4.500-.5-5-2.500l.5-3c-3.500-4-5.500-9-5.500-14.500z" fill="#80674c" />
        <path d="M22.500 28c4.500.5 10.500 2 16.500 7.500-5 .5-10-.5-13-3z" fill="#5d3e25" />
        <path d="M14.500 35.500l3 1-2.500 1z" fill="#f2c335" />
        <path d="M16 35c.5-2 3-2.500 4.500-1.200l-1.200 3z" fill="#fff" />
        <path d="M27.500 35l5 3 2.500-.5-3-3.500z" fill="#d99b3e" />
      </DockItem>
      <DockItem>
        <rect x="5" y="12" width="39" height="35" rx="5" fill="url(#green)" />
        <rect x="11" y="20.700" width="18.500" height="18" rx="4" fill="#f2fff4" />
        <path d="M31 27l7-5.500v17L31 33z" fill="#f2fff4" />
        <circle cx="37.700" cy="38.300" r="11" fill="#f5f6f6" />
        <path d="M33 32.500c1.200-1.200 2.500-.2 3.200 1.500l-1 2c.8 2 2 3.300 3.800 4.200l2-1c1.700.7 2.800 2 1.500 3.300-5 4.300-13.800-5-9.500-10z" fill="#0ccd35" />
      </DockItem>
      <DockItem badge="134">
        <path d="M13 49c3-2.500 4-5 3.500-7.500C9.500 38.500 6 33.500 6 27.500 6 18.500 15 11.500 27.300 11.500S49 18.500 49 27.500s-9 16-21.700 16c-2 0-3 0-4.500-.3C20 46.500 17 48.500 13 49z" fill="url(#blue)" />
        <path d="M43 51.500c-1.500-.5-2.700-1.500-3.500-2.800-10 4-18-2-18-9 0-6 5.800-10.500 13-10.500s13 4.500 13 10.500c0 3.200-1.700 6-4.500 8 0 1.500.5 2.700 2 3.800z" fill="#f1f4f8" />
        <circle cx="28.500" cy="39.500" r="1.900" fill="#1c4e86" /><circle cx="34.500" cy="39.500" r="1.900" fill="#1c4e86" /><circle cx="40.500" cy="39.500" r="1.900" fill="#1c4e86" />
      </DockItem>
      <DockItem>
        <path d="M4.700 16L40.300 10.300 44.300 46.700 11.300 50.700z" fill="#f3f2ed" />
        <path d="M17 14.300L40 10.800l1.500 14-9 3.500z" fill="#7fdc86" />
        <path d="M5.500 20l5-.8 6 10 14 12 1 6-20 2.500z" fill="#e8e6e0" />
        <path d="M6 23l5 6 8 14 .8 6-8 1z" fill="#f8b9cf" />
        <path d="M9.500 30l5-6 19 18 .5 5-6 .8-8.500-9z" fill="#fac51b" />
        <path d="M9 15.500c3 10 13 16 34 17M24 13c3 8 8 13 18 15" fill="none" stroke="#fff" strokeWidth="3.200" />
        <path d="M19 15.500c3 4 5 8 9 10" fill="none" stroke="#b5e0a8" strokeWidth="3" />
        <circle cx="17.300" cy="35" r="6" fill="#1668d8" />
        <path d="M17.300 30.500l3.200 8-3.200-1.700-3.200 1.700z" fill="#fff" />
        <circle cx="39.300" cy="39.300" r="10.700" fill="#eef0f1" />
        <circle cx="39.300" cy="39.300" r="6.200" fill="none" stroke="#6d8196" strokeWidth=".9" />
        <circle cx="39.300" cy="31" r="1.200" fill="#ec2a24" />
        <circle cx="39.300" cy="47.500" r=".8" fill="#333" /><circle cx="31" cy="39.300" r=".8" fill="#333" /><circle cx="47.500" cy="39.300" r=".8" fill="#333" />
        <text x="39.300" y="42" textAnchor="middle" fontFamily="Inter, sans-serif" fontSize="7.200" fill="#35506b">3D</text>
      </DockItem>
      <DockItem>
        <circle cx="27" cy="30.700" r="22" fill="#eceef0" />
        {PETALS.map(([a, c]) => (
          <ellipse key={a} cx="27" cy="21.200" rx="5.800" ry="8.800" fill={c} opacity=".85" transform={`rotate(${a} 27 30.700)`} />
        ))}
      </DockItem>
      <DockItem>
        <path d="M38 12l4-1 1 9-3 1z" fill="#e4e6e8" /><path d="M40 20l3.500-.5 1 9-3 1z" fill="#2fa6dc" /><path d="M41 29l4-.5 1 8-3.500 1z" fill="#33b85b" /><path d="M42 38l4.500-.7 1 7.500-4.500 1z" fill="#f0a91e" />
        <path d="M7.500 11.700L36.500 7c1.500-.2 2.300.4 2.500 1.600L45 46c.2 1.300-.3 2-1.500 2.300L14 53z" fill="#ac803f" stroke="#8a6430" strokeWidth=".8" />
        <path d="M7 11.700l2.800-.4L16 52.600l-2.700.4z" fill="#8c632b" />
        <circle cx="26.700" cy="27.500" r="11.300" fill="none" stroke="#83602e" strokeWidth="1" />
        <circle cx="26.500" cy="24.500" r="4" fill="#87632f" />
        <path d="M19.500 34.500c1-5 4.500-5.500 7.200-5.700 3 0 6.500.7 7.600 4.200-4 4-10.500 5-14.800 1.500z" fill="#87632f" />
      </DockItem>
      <DockItem>
        <path d="M6 16l34-5 2-1 5.500 37-33 5-2.500-1z" fill="#3a4a4d" stroke="#818c8f" strokeWidth="1" />
        <path d="M7.300 14L39.300 9.300 44.500 44 13 48.700z" fill="#fcfcfc" />
        <path d="M7.300 14L39.300 9.300l1.300 9.200L8.700 23.300z" fill="#ee2535" />
        <g transform="rotate(-8 25 30)" fontFamily="Inter, sans-serif" textAnchor="middle">
          <text x="25.500" y="19.800" fontSize="8" fill="#fff">МАРТ</text>
          <text x="26" y="42" fontSize="21.500" fontWeight="300" letterSpacing="-1" fill="#1b1b1b">23</text>
        </g>
        <path d="M13 49l32-4.700.5 2.200-32 4.700z" fill="#d9dcdc" />
      </DockItem>
      <DockItem running>
        <circle cx="27" cy="30.700" r="22" fill="#b9bcc6" />
        <circle cx="27" cy="30.200" r="21" fill="#f1f1f5" />
        <path d="M19.700 18.300L35.500 15v22M19.700 18.300v21" fill="none" stroke="url(#note)" strokeWidth="2.400" />
        <path d="M18.500 18l18.200-3.900v5.600l-18.200 3.900z" fill="#f73c82" />
        <ellipse cx="17" cy="39.500" rx="4" ry="3.400" fill="#8a5cf2" />
        <ellipse cx="32.700" cy="37.300" rx="4" ry="3.400" fill="#29a9f6" />
      </DockItem>
      <DockItem badge="1">
        <path d="M10 15c-.2-1.500.3-2.300 1.800-2.500L40 9c1.500-.2 2.200.4 2.400 1.800l4.400 37c.1 1.300-.4 2-1.600 2.200l-28 3.500c-1.500.2-2.200-.4-2.400-1.800z" fill="#262b33" />
        <path d="M8.500 15c-.2-1.500.3-2.300 1.800-2.500L39 9c1.500-.2 2.200.4 2.400 1.800L45.500 46c.1 1.300-.4 2-1.600 2.200l-28 3.500c-1.500.2-2.200-.4-2.400-1.800z" fill="#f6f6f6" />
        <circle cx="14.700" cy="20" r="2.800" fill="#2d63ef" /><circle cx="16" cy="27.700" r="2.800" fill="#f02b2f" /><circle cx="17" cy="35.300" r="2.800" fill="#fb8d18" /><circle cx="18.300" cy="43.300" r="2.800" fill="#55595e" />
        <path d="M21 20.500l14-1.700M22 28.300l17-2M23 36.300l17-2M24 44l17.500-2" stroke="#bcbcbc" strokeWidth=".8" />
      </DockItem>
      <DockItem>
        <path d="M8 12.700L40.700 8 46.700 48.300 13.300 52.700z" fill="#fbfbf8" stroke="#c9a70a" strokeWidth=".8" />
        <path d="M8 12.700L40.700 8l1 6.500L9 19.300z" fill="#fdd10a" />
        {LINES.map((i) => <path key={i} d="M10 21.500l32-4.700" transform={`translate(${i * 0.4} ${i * 3})`} stroke="#cfcfcf" strokeWidth=".7" />)}
      </DockItem>
      <DockItem>
        <circle cx="27" cy="30.700" r="21.700" fill="url(#pod)" stroke="#8f12b8" strokeWidth=".6" />
        <g fill="none" stroke="#fff" strokeWidth="1.800">
          <path d="M20 41.500a13.300 13.300 0 1114 0" />
          <path d="M21.500 36a8.300 8.300 0 1111 0" />
        </g>
        <circle cx="27" cy="29.500" r="3.400" fill="#fff" />
        <path d="M23.700 37c0-3.700 6.600-3.700 6.600 0L29 45.500c-.4 2-3.600 2-4 0z" fill="#fff" />
      </DockItem>
      <DockItem>
        <circle cx="27" cy="30.700" r="21.800" fill="#131314" stroke="#3a3b3e" strokeWidth=".8" />
        <g transform="translate(11.500 22)"><FaApple size={15} color="#fff" /></g>
        <text x="25" y="36.300" fontFamily="Inter, sans-serif" fontSize="17" fontWeight="500" letterSpacing="-.5" fill="#fff">tv</text>
      </DockItem>
      <DockItem badge="2">
        <circle cx="27" cy="30.700" r="21.800" fill="url(#store)" />
        <path d="M24.500 18.500L38.500 40M29.500 18.500L19 36M16 38.500l-1.500 2.200M14 34.300h14.500M33.500 34.300H40" fill="none" stroke="#fff" strokeWidth="3.300" strokeLinecap="round" />
      </DockItem>
      <DockItem badge="1">
        <rect x="5.300" y="11" width="43.400" height="40" rx="2" fill="url(#silver)" />
        <circle cx="27" cy="30.700" r="17.500" fill="#27282b" />
        <circle cx="27" cy="30.700" r="13" fill="none" stroke="#a9abae" strokeWidth="3" />
        {TEETH.map((a) => <path key={a} d="M27 14.500v3.500" stroke="#a9abae" strokeWidth="1.300" transform={`rotate(${a} 27 30.700)`} />)}
        <path d="M27 30.700H40M27 30.700L20.500 19.500M27 30.700L20.500 42" stroke="#a9abae" strokeWidth="2.500" />
        <circle cx="27" cy="30.700" r="3" fill="#8c8e90" />
      </DockItem>
      <div className="h-[66px] w-[24px] shrink-0 pt-[9px] pl-[12px]"><div className="h-[48px] w-px bg-[#1c2b40]" /></div>
      <DockItem running>
        <rect x="5.700" y="11.700" width="42.600" height="37" rx="1.500" fill="#26272a" stroke="#a1a3a6" strokeWidth="1.500" />
        <path d="M5.500 49.300h43" stroke="#6e7074" strokeWidth="1" />
        <text x="10.500" y="24" fontFamily="DejaVu Sans Mono, monospace" fontSize="11" fontWeight="bold" fill="#fff">&gt;_</text>
      </DockItem>
      <DockItem running>
        <path d="M8 14.300L41 8.300 47 48.700 14.300 53.700z" fill="#f7f7f7" />
        {LINES.map((i) => <path key={i} d="M9.500 19l32-5.500" transform={`translate(${i * 0.45} ${i * 3.1})`} stroke="#c3c8cf" strokeWidth=".6" />)}
        <path d="M12.500 13.500l6 39.500" stroke="#f0a3a3" strokeWidth=".7" />
        <path d="M45.500 9.500L34 48" stroke="#5d7587" strokeWidth="3.400" />
        <path d="M45 10L34 47" stroke="#a8c9dd" strokeWidth="2" />
        <path d="M35.300 46.500l-3.300 6.500-.2-7.500z" fill="#54504c" />
      </DockItem>
      <DockItem running badge="1">
        <circle cx="27" cy="30.700" r="22.300" fill="url(#tele)" />
        <path d="M12.500 31.200L38 21.300c1.200-.4 2.100.3 1.700 2l-4 18.800c-.3 1.400-1.200 1.700-2.400 1.100l-6.500-4.800-3.300 3.100c-.7.600-1.300.4-1.400-.5l-2-6.500-7-2.200c-1.300-.4-1.200-1-.6-1.100z" fill="#fff" />
        <path d="M20.800 34.500l13-8.700-9.500 10-.8 5z" fill="#c3dcec" />
      </DockItem>
      <DockItem running><VisualStudio /></DockItem>
      <DockItem running><VisualStudio /></DockItem>
      <div className="h-[66px] w-[23px] shrink-0 pt-[9px] pl-[12px]"><div className="h-[48px] w-px bg-[#1c2b40]" /></div>
      <DockItem>
        <path d="M13 12h30v42H13z" fill="#f3f3f3" />
        <path d="M14.500 8h15l5 4h8.500v10l-9-7z" fill="#fff" />
        <path d="M25 10h6M35.500 15h6.500" stroke="#222" strokeWidth="1.800" />
        <path d="M30 14l13 14V18z" fill="#e2e2e2" stroke="#bbb" strokeWidth=".5" />
        <path d="M17 14.500h8" stroke="#6a8bc8" strokeWidth=".9" />
        <path d="M18 18.500h11M18 21h9M18 24h16M18 26.500h14M18 29h5M31 29h6" fill="none" stroke="#c3c3c3" strokeWidth=".8" />
        <path d="M36 51h5" stroke="#4a68c8" strokeWidth="1.300" />
        <path d="M13 14v39" stroke="#151515" strokeWidth="3" strokeDasharray="1.800 1.500" />
      </DockItem>
      <DockItem>
        <path d="M12 13l5-5 4 2 5-3 5 3 5-2 6 4-3 5H14z" fill="#e9e9e9" />
        <path d="M13 12l6-2 2 4zM25 9l5 4-6 2zM33 10l7 1-3 5z" fill="#2b2b2e" />
        <path d="M20 11l4 2-3 2z" fill="#d0772e" /><path d="M24 12l3-1v4z" fill="#2aa7c4" />
        <path d="M10.300 13l1.500-1.500L15 16h24l5-5 1.700 1.500L41 50.500c-.5 3-3.500 4-14 4s-12-1.500-12.500-4z" fill="url(#bin)" />
        <path d="M11 14.500c6 3 28 3 34 0" fill="none" stroke="#f6f6f6" strokeWidth="1.600" />
        <path d="M16 24c5 4 8 12 7 26M38 22c-5 6-7 14-6 28" fill="none" stroke="#e4e5e6" strokeWidth="2.500" opacity=".5" />
      </DockItem>
    </div>
  );
}

export default function App() {
  return (
    <div className="relative flex h-[900px] w-[1440px] flex-col overflow-hidden bg-[#0a1422] font-['Inter',sans-serif]">
      <div className="absolute inset-x-0 bottom-0 h-[72px] bg-[repeating-linear-gradient(163deg,#081322_0px,#0e1b2d_2px,#06101d_4px,#0a1727_7px)]" />
      <div className="relative flex flex-col">
        <MenuBar />
        <div className="h-px shrink-0 bg-[#2b3b58]" />
        <div className="flex flex-col overflow-hidden rounded-[5px]">
          <BrowserToolbar />
          <TabBar />
          <ApiPage />
        </div>
      </div>
      <FileDialog />
      <Dock />
    </div>
  );
}
